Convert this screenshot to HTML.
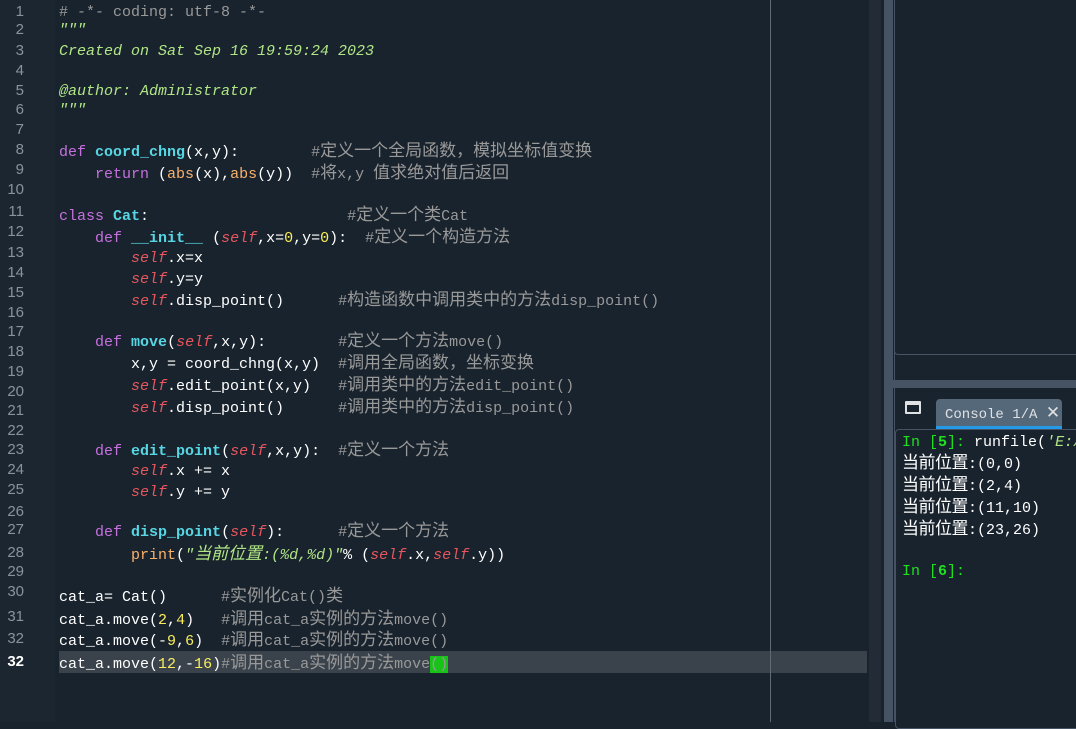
<!DOCTYPE html>
<html><head><meta charset="utf-8"><style>
*{margin:0;padding:0;box-sizing:border-box}
html,body{width:1076px;height:722px}
body{background:#19232d;position:relative;overflow:hidden;font-family:"Liberation Mono","Noto Sans CJK SC",monospace;font-size:15px;color:#fff}
.g{position:absolute;left:0;top:0;width:55px;height:722px;background:#1c2631}
.n{position:absolute;left:0;width:24px;text-align:right;color:#8a939c;font-family:"Liberation Sans","DejaVu Sans",sans-serif;font-size:15px;line-height:20px}
.l{position:absolute;left:59px;white-space:pre;line-height:21px;height:21px}
.c{font-family:"Noto Sans CJK SC",sans-serif;letter-spacing:0;font-size:17px;line-height:1}
.k{color:#c670e0}.f{color:#57d6e4;font-weight:bold}.b{color:#fab16c}.m{color:#999}.s{color:#b0e686;font-style:italic}.se{color:#e7565e;font-style:italic}.d{color:#faed5c}
.cl{position:absolute;left:902px;white-space:pre;line-height:22px}
.cl .c{font-size:17px;letter-spacing:-0.5px}
.gr{color:#1fe01f}
</style></head><body>
<div class="g"></div>
<div style="position:absolute;left:59px;top:651px;width:808px;height:22px;background:#3a434b"></div>
<div style="position:absolute;left:770px;top:0;width:1px;height:722px;background:#5f6a75"></div>
<div style="position:absolute;left:869px;top:0;width:12px;height:722px;background:#222b36"></div>
<div style="position:absolute;left:884px;top:0;width:1px;height:722px;background:#455364"></div>
<div style="position:absolute;left:885px;top:0;width:8px;height:722px;background:#455364"></div>
<div style="position:absolute;left:894px;top:0;width:1px;height:722px;background:#455364"></div>
<div style="position:absolute;left:894px;top:-5px;width:190px;height:360px;border:1px solid #455364;border-radius:4px"></div>
<div style="position:absolute;left:885px;top:380px;width:191px;height:8px;background:#455364"></div>
<div style="position:absolute;left:905px;top:401px;width:16px;height:13px;border:2px solid #e0e1e3;border-top-width:4px;border-radius:1px"></div>
<div style="position:absolute;left:936px;top:399px;width:126px;height:30px;background:#54687a;border-radius:4px 4px 0 0;color:#e0e1e3;font-size:14px;line-height:28px;padding-left:9px;font-family:'Liberation Mono',monospace">Console 1/A <span style="font-family:'DejaVu Sans';font-size:17px">✕</span></div>
<div style="position:absolute;left:936px;top:426px;width:126px;height:3px;background:#259ae9"></div>
<div style="position:absolute;left:895px;top:429px;width:190px;height:300px;border:1px solid #455364;border-radius:4px"></div>

<div class="n" style="top:2px">1</div><div class="n" style="top:20px">2</div><div class="n" style="top:41px">3</div><div class="n" style="top:61px">4</div><div class="n" style="top:81px">5</div><div class="n" style="top:100px">6</div><div class="n" style="top:120px">7</div><div class="n" style="top:140px">8</div><div class="n" style="top:160px">9</div><div class="n" style="top:180px">10</div><div class="n" style="top:202px">11</div><div class="n" style="top:222px">12</div><div class="n" style="top:243px">13</div><div class="n" style="top:263px">14</div><div class="n" style="top:283px">15</div><div class="n" style="top:303px">16</div><div class="n" style="top:322px">17</div><div class="n" style="top:342px">18</div><div class="n" style="top:362px">19</div><div class="n" style="top:382px">20</div><div class="n" style="top:401px">21</div><div class="n" style="top:421px">22</div><div class="n" style="top:440px">23</div><div class="n" style="top:460px">24</div><div class="n" style="top:480px">25</div><div class="n" style="top:502px">26</div><div class="n" style="top:520px">27</div><div class="n" style="top:543px">28</div><div class="n" style="top:562px">29</div><div class="n" style="top:582px">30</div><div class="n" style="top:607px">31</div><div class="n" style="top:629px">32</div><div class="n" style="top:652px;color:#fff;font-weight:bold">32</div>

<div class="l m" style="top:2px"># -*- coding: utf-8 -*-</div>
<div class="l s" style="top:20px">"""</div>
<div class="l s" style="top:41px">Created on Sat Sep 16 19:59:24 2023</div>
<div class="l s" style="top:81px">@author: Administrator</div>
<div class="l s" style="top:100px">"""</div>
<div class="l" style="top:140px"><span class="k">def</span> <span class="f">coord_chng</span>(x,y):        <span class="m">#<span class="c">定义一个全局函数，模拟坐标值变换</span></span></div>
<div class="l" style="top:162px">    <span class="k">return</span> (<span class="b">abs</span>(x),<span class="b">abs</span>(y))  <span class="m">#<span class="c">将</span>x,y <span class="c">值求绝对值后返回</span></span></div>
<div class="l" style="top:204px"><span class="k">class</span> <span class="f">Cat</span>:                      <span class="m">#<span class="c">定义一个类</span>Cat</span></div>
<div class="l" style="top:226px">    <span class="k">def</span> <span class="f">__init__</span> (<span class="se">self</span>,x=<span class="d">0</span>,y=<span class="d">0</span>):  <span class="m">#<span class="c">定义一个构造方法</span></span></div>
<div class="l" style="top:248px">        <span class="se">self</span>.x=x</div>
<div class="l" style="top:269px">        <span class="se">self</span>.y=y</div>
<div class="l" style="top:289px">        <span class="se">self</span>.disp_point()      <span class="m">#<span class="c">构造函数中调用类中的方法</span>disp_point()</span></div>
<div class="l" style="top:330px">    <span class="k">def</span> <span class="f">move</span>(<span class="se">self</span>,x,y):        <span class="m">#<span class="c">定义一个方法</span>move()</span></div>
<div class="l" style="top:352px">        x,y = coord_chng(x,y)  <span class="m">#<span class="c">调用全局函数，坐标变换</span></span></div>
<div class="l" style="top:374px">        <span class="se">self</span>.edit_point(x,y)   <span class="m">#<span class="c">调用类中的方法</span>edit_point()</span></div>
<div class="l" style="top:396px">        <span class="se">self</span>.disp_point()      <span class="m">#<span class="c">调用类中的方法</span>disp_point()</span></div>
<div class="l" style="top:439px">    <span class="k">def</span> <span class="f">edit_point</span>(<span class="se">self</span>,x,y):  <span class="m">#<span class="c">定义一个方法</span></span></div>
<div class="l" style="top:461px">        <span class="se">self</span>.x += x</div>
<div class="l" style="top:482px">        <span class="se">self</span>.y += y</div>
<div class="l" style="top:520px">    <span class="k">def</span> <span class="f">disp_point</span>(<span class="se">self</span>):      <span class="m">#<span class="c">定义一个方法</span></span></div>
<div class="l" style="top:543px">        <span class="b">print</span>(<span class="s">"<span class="c">当前位置</span>:(%d,%d)"</span>% (<span class="se">self</span>.x,<span class="se">self</span>.y))</div>
<div class="l" style="top:585px">cat_a= Cat()      <span class="m">#<span class="c">实例化</span>Cat()<span class="c">类</span></span></div>
<div class="l" style="top:608px">cat_a.move(<span class="d">2</span>,<span class="d">4</span>)   <span class="m">#<span class="c">调用</span>cat_a<span class="c">实例的方法</span>move()</span></div>
<div class="l" style="top:629px">cat_a.move(-<span class="d">9</span>,<span class="d">6</span>)  <span class="m">#<span class="c">调用</span>cat_a<span class="c">实例的方法</span>move()</span></div>
<div class="l" style="top:652px">cat_a.move(<span class="d">12</span>,-<span class="d">16</span>)<span class="m">#<span class="c">调用</span>cat_a<span class="c">实例的方法</span>move<span style="background:#17c317">()</span></span></div>

<div class="cl" style="top:432px"><span class="gr">In [<b>5</b>]:</span> runfile(<span class="s">'E:/</span></div>
<div class="cl" style="top:452px"><span class="c">当前位置</span>:(0,0)</div>
<div class="cl" style="top:474px"><span class="c">当前位置</span>:(2,4)</div>
<div class="cl" style="top:496px"><span class="c">当前位置</span>:(11,10)</div>
<div class="cl" style="top:518px"><span class="c">当前位置</span>:(23,26)</div>
<div class="cl" style="top:561px"><span class="gr">In [<b>6</b>]:</span></div>
</body></html>
